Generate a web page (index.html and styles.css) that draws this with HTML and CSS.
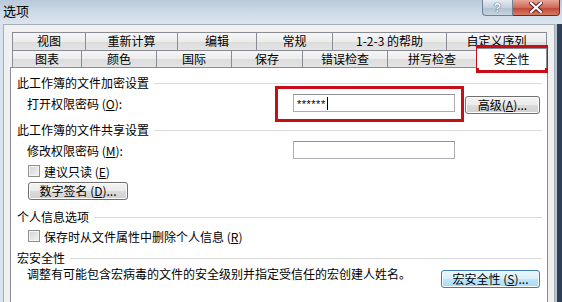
FILE: index.html
```html
<!DOCTYPE html>
<html>
<head>
<meta charset="utf-8">
<link rel="stylesheet" href="styles.css">
</head>
<body>
<div class="titlebar">
  <span class="title">选项</span>
  <div class="caption">
    <span class="cap-help">?</span>
    <span class="cap-close"><svg width="14" height="11" viewBox="0 0 14 11"><path d="M2 1 L12 10 M12 1 L2 10" stroke="#5a2020" stroke-width="4" stroke-linecap="square"/><path d="M2 1 L12 10 M12 1 L2 10" stroke="#fff" stroke-width="2.2" stroke-linecap="square"/></svg></span>
  </div>
</div>
<div class="client">
  <div class="tabrow row1">
    <div class="tab w74">视图</div>
    <div class="tab w92">重新计算</div>
    <div class="tab w79">编辑</div>
    <div class="tab w76">常规</div>
    <div class="tab w114">1-2-3 的帮助</div>
    <div class="tab w100">自定义序列</div>
  </div>
  <div class="tabrow row2">
    <div class="tab w70">图表</div>
    <div class="tab w75">颜色</div>
    <div class="tab w75">国际</div>
    <div class="tab w71">保存</div>
    <div class="tab w85">错误检查</div>
    <div class="tab w89">拼写检查</div>
    <div class="tab w70 active">安全性</div>
  </div>
  <div class="panel">
    <div class="sec">此工作簿的文件加密设置</div>
    <div class="field">
      <span class="lbl">打开权限密码 (<u>O</u>):</span>
      <span class="input"><span class="pwd">******</span><span class="caret"></span></span>
      <span class="btn btn-adv">高级(<u>A</u>)...</span>
    </div>
    <div class="sec gap9">此工作簿的文件共享设置</div>
    <div class="field">
      <span class="lbl">修改权限密码 (<u>M</u>):</span>
      <span class="input"></span>
    </div>
    <div class="check gap3"><span class="box"></span>建议只读 (<u>E</u>)</div>
    <div class="btnrow"><span class="btn btn-sign">数字签名 (<u>D</u>)...</span></div>
    <div class="sec gap9">个人信息选项</div>
    <div class="check gap3"><span class="box"></span>保存时从文件属性中删除个人信息 (<u>R</u>)</div>
    <div class="sec gap6">宏安全性</div>
    <div class="last">
      <span class="desc">调整有可能包含宏病毒的文件的安全级别并指定受信任的宏创建人姓名。</span>
      <span class="btn btn-macro">宏安全性 (<u>S</u>)...</span>
    </div>
  </div>
</div>
<div class="mark mark-tab"></div>
<div class="mark mark-pwd"></div>
</body>
</html>
```
FILE: styles.css
```css
* { box-sizing: border-box; }
html, body { margin: 0; padding: 0; }
body {
  width: 562px;
  height: 302px;
  overflow: hidden;
  position: relative;
  background: linear-gradient(to right, #d9e3ee 0 555px, #b9c4d1 555px 557px, #2f3f55 557px 562px);
  font-family: "Noto Sans CJK SC", "Noto Sans", sans-serif;
  font-size: 12px;
  color: #000;
}
u { text-decoration: underline; text-underline-offset: 1px; }

.titlebar {
  height: 24px;
  display: flex;
  justify-content: space-between;
  align-items: flex-start;
  background: linear-gradient(#b8c9db, #cfdbe8 55%, #dbe4ee);
}
.title { padding: 2px 0 0 3px; line-height: 18px; font-size: 13px; }
.caption { display: flex; margin-right: 2px; }
.cap-help {
  width: 31px; height: 16px;
  border: 1px solid #6f8196; border-top: none;
  border-radius: 0 0 0 4px;
  background: linear-gradient(#e4ebf2, #c3d0dd 50%, #b0c0d1 51%, #c7d4e1);
  display: flex; align-items: center; justify-content: center;
  color: #fff; font-weight: bold; font-size: 12px; line-height: 14px;
  font-family: "Liberation Sans", sans-serif;
  text-shadow: 0 0 1px #3c4c60, 0 0 1px #3c4c60;
}
.cap-close {
  width: 47px; height: 16px;
  border: 1px solid #6b2a2a; border-top: none; border-left: none;
  border-radius: 0 0 4px 0;
  background: linear-gradient(#e7a597, #cf6a5a 50%, #bd4534 51%, #d97a63);
  display: flex; align-items: center; justify-content: center;
}

.client {
  margin-left: 3px;
  width: 552px;
  height: 278px;
  background: #f0f0f0;
  border: 1px solid #a3aebb;
  border-bottom: none;
  padding: 7px 6px 0 6px;
}

.tabrow { display: flex; margin-left: 2px; }
.row1 { height: 18px; }
.row2 { height: 17px; }
.tab {
  flex: none;
  border: 1px solid #898c95;
  border-left: none;
  border-bottom: none;
  background: linear-gradient(#f6f6f6, #ececec 50%, #dcdcdc 51%, #e4e4e4);
  text-align: center;
  line-height: 16px;
  white-space: nowrap;
}
.tab:first-child { border-left: 1px solid #898c95; }
.tab.active {
  background: #fff;
  height: 20px;
  margin-top: -2px;
  line-height: 19px;
  position: relative;
  z-index: 1;
}
.w70 { width: 70px; } .w71 { width: 71px; } .w74 { width: 74px; } .w75 { width: 75px; }
.w76 { width: 76px; } .w79 { width: 79px; } .w85 { width: 85px; } .w89 { width: 89px; }
.w92 { width: 92px; } .w100 { width: 100px; } .w114 { width: 114px; }

.panel {
  height: 240px;
  background: #fff;
  border: 1px solid #898c95;
  border-bottom: none;
  padding: 7px 5px 0 6px;
}

.sec { display: flex; align-items: center; height: 16px; line-height: 16px; white-space: nowrap; }
.sec::after { content: ""; flex: 1; height: 1px; background: #dadada; margin-left: 5px; }
.gap9 { margin-top: 9px; }
.gap6 { margin-top: 6px; }
.gap3 { margin-top: 3px; }

.field { display: flex; align-items: center; height: 20px; margin-top: 2px; padding-left: 10px; }
.lbl { width: 266px; flex: none; }
.input {
  width: 162px; height: 18px; flex: none;
  border: 1px solid #abadb3; border-top-color: #8e9096;
  background: #fff;
  display: flex; align-items: center; padding-left: 3px;
}
.pwd { font-family: "Liberation Sans", sans-serif; font-size: 11px; letter-spacing: 0.5px; line-height: 12px; padding-top: 2px; }
.caret { width: 1px; height: 13px; background: #000; margin-left: 1px; }

.btn {
  flex: none;
  height: 18px;
  border: 1px solid #707070;
  border-radius: 3px;
  background: linear-gradient(#f3f3f3, #ebebeb 48%, #dcdcdc 52%, #cfcfcf);
  box-shadow: inset 0 0 0 1px #fcfcfc;
  display: flex; align-items: center; justify-content: center;
  line-height: 16px; white-space: nowrap;
}
.btn-adv { width: 75px; margin-left: 10px; margin-top: 3px; }
.btn-sign { width: 100px; }
.btn-macro {
  width: 99px; margin-top: 4px;
  border-color: #3c7fb1;
  background: linear-gradient(#eaf6fd, #d9f0fc 48%, #bee6fd 52%, #a7d9f5);
}

.check { display: flex; align-items: center; height: 16px; padding-left: 11px; white-space: nowrap; }
.box {
  width: 12px; height: 12px; margin-right: 4px; flex: none;
  border: 1px solid #8f8f8f;
  background: linear-gradient(135deg, #d2d2d2, #f4f4f4);
  box-shadow: inset 0 0 0 1px #f3f3f3;
}
.btnrow { display: flex; margin-top: 3px; padding-left: 11px; }

.last { display: flex; justify-content: space-between; align-items: flex-start; padding-left: 10px; padding-right: 2px; }
.desc { line-height: 16px; white-space: nowrap; }

.mark { position: absolute; border: 3px solid #c90d17; }
.mark-tab { left: 476px; top: 45px; width: 72px; height: 28px; }
.mark-pwd { left: 275px; top: 86px; width: 189px; height: 36px; }
```
